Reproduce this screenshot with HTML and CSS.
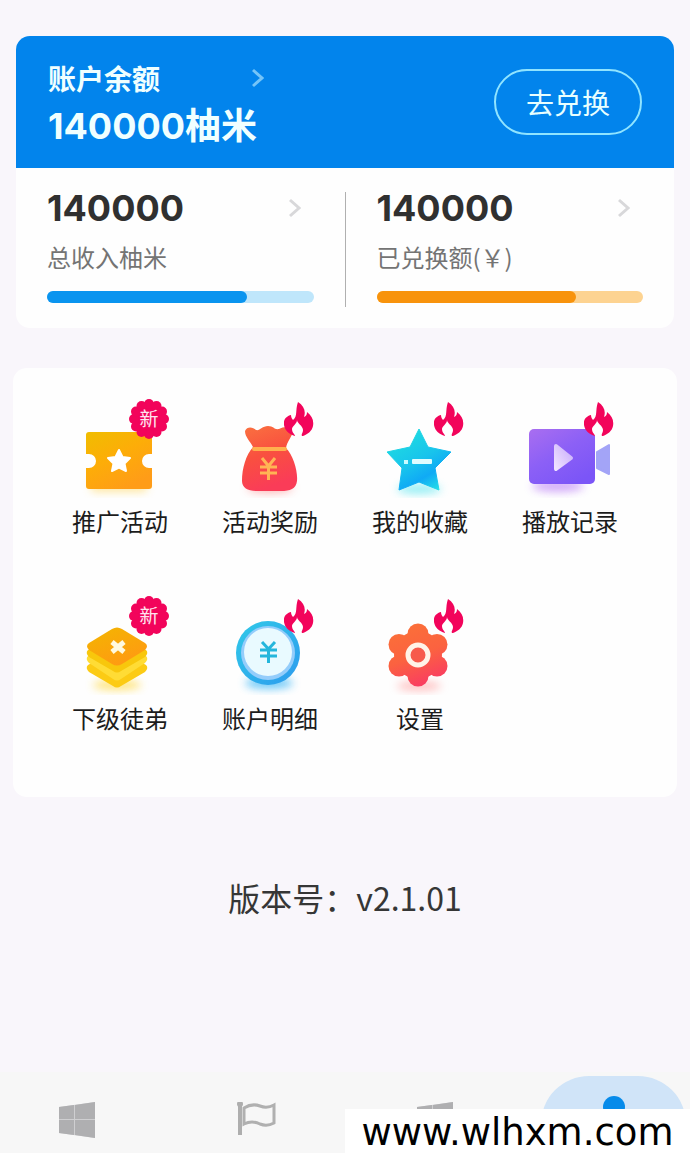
FILE: index.html
```html
<!DOCTYPE html>
<html lang="zh-CN">
<head>
<meta charset="utf-8">
<meta name="viewport" content="width=device-width, initial-scale=1">
<title>账户中心</title>
<link rel="stylesheet" href="styles.css">
</head>
<body>
<svg class="defs" aria-hidden="true">
  <defs>
    <linearGradient id="gold" x1="0" y1="0" x2=".6" y2="1"><stop offset="0" stop-color="#f0bd00"/><stop offset=".5" stop-color="#fdad08"/><stop offset="1" stop-color="#ff9c18"/></linearGradient>
    <linearGradient id="red" x1="0" y1="0" x2=".3" y2="1"><stop offset="0" stop-color="#fa7240"/><stop offset=".5" stop-color="#f9503f"/><stop offset="1" stop-color="#fa3c58"/></linearGradient>
    <linearGradient id="cyan" x1=".2" y1="0" x2=".8" y2="1"><stop offset="0" stop-color="#20dfdf"/><stop offset=".5" stop-color="#18c4ec"/><stop offset=".75" stop-color="#10aaf5"/><stop offset="1" stop-color="#25dfe8"/></linearGradient>
    <linearGradient id="violet" x1="0" y1="0" x2=".7" y2="1"><stop offset="0" stop-color="#a96ef0"/><stop offset=".5" stop-color="#8c60f6"/><stop offset="1" stop-color="#7b55f7"/></linearGradient>
    <linearGradient id="play" x1="0" y1="1" x2="1" y2="0"><stop offset="0" stop-color="#f0e3ff"/><stop offset="1" stop-color="#c9aefb"/></linearGradient>
    <linearGradient id="tile" x1="0" y1="0" x2=".6" y2="1"><stop offset="0" stop-color="#f3b600"/><stop offset="1" stop-color="#ff9a12"/></linearGradient>
    <linearGradient id="ring" x1="0" y1="0" x2="1" y2="1"><stop offset="0" stop-color="#30c9e8"/><stop offset="1" stop-color="#2d9bee"/></linearGradient>
    <linearGradient id="gear" gradientUnits="userSpaceOnUse" x1="36" y1="28" x2="60" y2="92"><stop offset="0" stop-color="#fb7038"/><stop offset=".5" stop-color="#fb6240"/><stop offset="1" stop-color="#f93866"/></linearGradient>
    <filter id="soft" x="-50%" y="-150%" width="200%" height="400%"><feGaussianBlur stdDeviation="4"/></filter>
    <symbol id="fire" viewBox="0 0 30 34">
      <path fill="#f2045b" d="M14 0C20 4 22 9 20 15C22 14 23 13 23 10C28 14 30 18 29 24C28 29 24 32 19 34H11C5 32 1 29 0 23C-1 17 3 14 7 13C7 15 8 17 9 18C14 14 11 8 14 0Z"/>
      <path fill="#fff" d="M13 18C13 21 19 24 19 28C19 31 17 32 18 34H11C11 32 8 31 8 27C8 24 13 22 13 18Z"/>
    </symbol>
    <symbol id="fresh" viewBox="0 0 40 40">
      <g fill="#f2045b"><circle cx="20" cy="20" r="17"/><circle cx="20" cy="5" r="5"/><circle cx="27.500" cy="7" r="5"/><circle cx="33" cy="12.500" r="5"/><circle cx="35" cy="20" r="5"/><circle cx="33" cy="27.500" r="5"/><circle cx="27.500" cy="33" r="5"/><circle cx="20" cy="35" r="5"/><circle cx="12.500" cy="33" r="5"/><circle cx="7" cy="27.500" r="5"/><circle cx="5" cy="20" r="5"/><circle cx="7" cy="12.500" r="5"/><circle cx="12.500" cy="7" r="5"/></g>
      <text class="fresh-text" x="20" y="27" text-anchor="middle">新</text>
    </symbol>
    <symbol id="window" viewBox="0 0 36 36">
      <path fill="#cfcfd1" d="M0 5L36 0V36L0 31Z"/>
      <path fill="#afafb1" d="M0 5L15 3V17H0ZM16 3L36 0V17H16ZM0 18H15V33L0 31ZM16 18H36V36L16 33Z"/>
    </symbol>
    <symbol id="chevron" viewBox="0 0 12 20">
      <path fill="none" stroke="currentColor" stroke-width="3" d="M1 2L10 10L1 18"/>
    </symbol>
  </defs>
</svg>

<main class="page">
  <section class="balance card">
    <header class="balance-head">
      <div class="balance-info">
        <a class="balance-link" href="#account">账户余额<svg class="chevron"><use href="#chevron"/></svg></a>
        <strong class="balance-value">140000柚米</strong>
      </div>
      <button class="redeem" type="button">去兑换</button>
    </header>
    <div class="stats">
      <a class="stat" href="#income">
        <span class="stat-top"><strong class="stat-value">140000</strong><svg class="chevron"><use href="#chevron"/></svg></span>
        <span class="stat-label">总收入柚米</span>
        <span class="bar bar-blue"><span class="bar-fill"></span></span>
      </a>
      <span class="divider"></span>
      <a class="stat" href="#redeemed">
        <span class="stat-top"><strong class="stat-value">140000</strong><svg class="chevron"><use href="#chevron"/></svg></span>
        <span class="stat-label">已兑换额(￥)</span>
        <span class="bar bar-orange"><span class="bar-fill"></span></span>
      </a>
    </div>
  </section>

  <nav class="menu card" aria-label="功能">
    <a class="menu-item" href="#promo">
      <svg class="menu-icon" viewBox="0 0 100 100">
        <rect x="20" y="82" width="58" height="12" rx="6" fill="#ffd24a" opacity=".5" filter="url(#soft)"/>
        <path fill="url(#gold)" d="M19 34H79Q82 34 82 37V56H79A7 7 0 0 0 79 70H82V88Q82 91 79 91H19Q16 91 16 88V70H19A7 7 0 0 0 19 56H16V37Q16 34 19 34Z"/>
        <path fill="#fff" stroke="#fff" stroke-width="2" stroke-linejoin="round" d="M49 52L52.500 59L60 60L54.500 65.500L56 73L49 69.500L42 73L43.500 65.500L38 60L45.500 59Z"/>
        <use href="#fresh" x="59" y="1" width="40" height="40"/>
      </svg>
      <span>推广活动</span>
    </a>
    <a class="menu-item" href="#rewards">
      <svg class="menu-icon" viewBox="0 0 100 100">
        <ellipse cx="50" cy="90" rx="23" ry="5" fill="#ff6d6d" opacity=".5" filter="url(#soft)"/>
        <path fill="url(#red)" d="M33 49C30 43 25 39 25 33C27 28 33 29 36 32C40 33 42 28 48 28C54 28 54 32 59 31C64 28 72 28 73 33C72 39 67 43 66 50C73 57 78 73 77 83C76 91 70 93 61 93H37C28 93 22 90 22 83C22 70 26 57 33 49Z"/>
        <path fill="none" stroke="#ffb04e" stroke-width="4" stroke-linecap="round" d="M34 51H65"/>
        <path fill="none" stroke="#ffb454" stroke-width="3" d="M42 60L48.500 68L55 60M48.500 68V82M40 69H57M40 75H57"/>
        <use href="#fire" x="64" y="4" width="30" height="34"/>
      </svg>
      <span>活动奖励</span>
    </a>
    <a class="menu-item" href="#favorites">
      <svg class="menu-icon" viewBox="0 0 100 100">
        <ellipse cx="49" cy="91" rx="22" ry="5" fill="#4ee4ee" opacity=".6" filter="url(#soft)"/>
        <path fill="url(#cyan)" stroke="url(#cyan)" stroke-linejoin="round" d="M49 31L58 49L81 54L65 70L69 92L49 84L29 92L32 70L17 54L40 49Z"/>
        <path fill="#c8fbff" d="M34 62H38V66H34Z"/><rect x="42" y="61" width="20" height="5" rx="1" fill="#e0fcff"/>
        <use href="#fire" x="64" y="4" width="30" height="34"/>
      </svg>
      <span>我的收藏</span>
    </a>
    <a class="menu-item" href="#history">
      <svg class="menu-icon" viewBox="0 0 100 100">
        <ellipse cx="38" cy="88" rx="26" ry="6" fill="#b573f5" opacity=".6" filter="url(#soft)"/>
        <path fill="#a3a4f7" stroke="#a3a4f7" stroke-width="2" stroke-linejoin="round" d="M77 54L89 47V76L77 70Z"/>
        <rect x="9" y="31" width="66" height="55" rx="5" fill="url(#violet)"/>
        <path fill="url(#play)" stroke="url(#play)" stroke-width="4" stroke-linejoin="round" d="M36 48L51 60L36 71Z"/>
        <use href="#fire" x="64" y="4" width="30" height="34"/>
      </svg>
      <span>播放记录</span>
    </a>
    <a class="menu-item" href="#members">
      <svg class="menu-icon" viewBox="0 0 100 100">
        <ellipse cx="47" cy="90" rx="24" ry="5" fill="#ffd83a" opacity=".7" filter="url(#soft)"/>
        <path fill="#fccb14" d="M18 70L47 54L76 70Q79 73 75 77L51 91Q47 94 43 91L19 77Q15 73 18 70Z"/>
        <path fill="#ffdc35" d="M18 61L47 46L76 61Q79 64 75 68L51 84Q47 87 43 84L19 68Q15 64 18 61Z"/>
        <path fill="#f8c70c" d="M18 55L47 40L76 55Q79 58 75 62L51 76Q47 79 43 76L19 62Q15 58 18 55Z"/>
        <path fill="url(#tile)" d="M42 34Q47 31 52 34L75 48Q79 51 75 55L52 69Q47 72 42 69L19 55Q15 51 19 48Z"/>
        <path stroke="#fff9df" stroke-width="5" d="M42 47L54 57M54 47L42 57"/>
        <use href="#fresh" x="59" y="1" width="40" height="40"/>
      </svg>
      <span>下级徒弟</span>
    </a>
    <a class="menu-item" href="#details">
      <svg class="menu-icon" viewBox="0 0 100 100">
        <ellipse cx="49" cy="88" rx="24" ry="6" fill="#36b4f5" opacity=".7" filter="url(#soft)"/>
        <circle cx="48" cy="58" r="32" fill="url(#ring)"/>
        <circle cx="48" cy="58" r="27" fill="#94cdfb"/>
        <circle cx="48" cy="57" r="24" fill="#e9faff"/>
        <path fill="none" stroke="#24b6dc" stroke-width="3" d="M42 47L48.500 54L55 47M48.500 54V68M40 55H57M40 61H57"/>
        <use href="#fire" x="64" y="4" width="30" height="34"/>
      </svg>
      <span>账户明细</span>
    </a>
    <a class="menu-item" href="#settings">
      <svg class="menu-icon" viewBox="0 0 100 100">
        <ellipse cx="49" cy="91" rx="22" ry="5" fill="#ff8a8a" opacity=".5" filter="url(#soft)"/>
        <g fill="url(#gear)"><circle cx="48" cy="60" r="24"/><circle cx="48" cy="39" r="10.500"/><circle cx="67" cy="49.500" r="10.500"/><circle cx="67" cy="71" r="10.500"/><circle cx="48" cy="81" r="10.500"/><circle cx="29" cy="71" r="10.500"/><circle cx="29" cy="49.500" r="10.500"/></g>
        <circle cx="48" cy="60" r="10" fill="#f75a4c" stroke="#fff3e8" stroke-width="5"/>
        <use href="#fire" x="64" y="4" width="30" height="34"/>
      </svg>
      <span>设置</span>
    </a>
  </nav>

  <p class="version">版本号：v2.1.01</p>
</main>

<footer class="footer">
  <nav class="tabs" aria-label="主导航">
    <a class="tab" href="#home" aria-label="首页"><svg class="tab-icon"><use href="#window"/></svg></a>
    <a class="tab" href="#tasks" aria-label="任务"><svg class="tab-icon tab-flag" viewBox="0 0 40 36">
      <path fill="none" stroke="#aeaeae" stroke-width="4" d="M4 1V33"/><circle cx="4" cy="2" r="3" fill="#aeaeae"/>
      <path fill="none" stroke="#b0b0b0" stroke-width="3" d="M8 6Q16 1 24 4Q31 7 38 3V21Q31 25 24 22Q16 18 8 22Z"/></svg></a>
    <a class="tab" href="#apps" aria-label="应用"><svg class="tab-icon"><use href="#window"/></svg></a>
    <a class="tab tab-active" href="#me" aria-label="我的" aria-current="page"><svg class="tab-icon tab-user" viewBox="0 0 40 44"><circle cx="20" cy="11" r="11" fill="#078bea"/><path fill="#078bea" d="M0 44C0 29 10 24 20 24S40 29 40 44Z"/></svg></a>
  </nav>
  <span class="site">www.wlhxm.com</span>
</footer>
</body>
</html>
```
FILE: styles.css
```css
* {
  box-sizing: border-box;
}

body {
  margin: 0;
  min-height: 100vh;
  display: flex;
  flex-direction: column;
  background: #f9f6fb;
  color: #1c1c1c;
  font-family: "Noto Sans CJK SC", "Noto Sans", sans-serif;
}

a {
  color: inherit;
  text-decoration: none;
}

.defs {
  position: absolute;
  width: 0;
  height: 0;
}

.page {
  flex: 1;
  padding: 36px 13px 0;
}

.card {
  border-radius: 14px;
  background: #fefefe;
}

.balance {
  margin: 0 3px;
  overflow: hidden;
}

.balance-head {
  display: flex;
  align-items: center;
  justify-content: space-between;
  height: 132px;
  padding: 0 32px;
  background: #0284ec;
  color: #f0ffff;
}

.balance-info {
  display: flex;
  flex-direction: column;
  gap: 4px;
  padding-top: 4px;
}

.balance-link {
  display: flex;
  align-items: center;
  justify-content: space-between;
  width: 216px;
  line-height: 40px;
  font-size: 28px;
  font-weight: 700;
}

.chevron {
  width: 12px;
  height: 20px;
  color: #d8d8da;
}

.balance-link .chevron {
  color: #74c4f8;
}

.balance-value,
.stat-value {
  font-family: Inter, "Noto Sans CJK SC", sans-serif;
  font-size: 36px;
  font-weight: 700;
  line-height: 48px;
}

.redeem {
  width: 148px;
  height: 66px;
  padding: 0;
  border: 2px solid #90e4ff;
  border-radius: 33px;
  background: transparent;
  color: #e8ffff;
  font-family: inherit;
  font-size: 28px;
}

.stats {
  display: grid;
  grid-template-columns: 1fr 1px 1fr;
  gap: 31px;
  padding: 16px 31px 25px;
}

.stat {
  display: flex;
  flex-direction: column;
}

.stat-top {
  display: flex;
  align-items: center;
  justify-content: space-between;
  padding-right: 13px;
}

.stat-value {
  color: #303030;
}

.stat-label {
  margin: 7px 0 17px;
  color: #747474;
  font-size: 24px;
  line-height: 35px;
}

.divider {
  margin: 8px 0 -4px;
  background: #b0b0b0;
}

.bar {
  height: 12px;
  border-radius: 6px;
}

.bar-fill {
  display: block;
  width: 75%;
  height: 100%;
  border-radius: 6px;
}

.bar-blue {
  background: #bfe6fb;
}

.bar-blue .bar-fill {
  background: #0a94ef;
}

.bar-orange {
  background: #fdd391;
}

.bar-orange .bar-fill {
  background: #f8930c;
}

.menu {
  display: grid;
  grid-template-columns: repeat(4, 1fr);
  row-gap: 58px;
  margin-top: 40px;
  padding: 30px 32px 63px;
}

.menu-item {
  display: flex;
  flex-direction: column;
  align-items: center;
  gap: 7px;
  font-size: 24px;
  line-height: 32px;
}

.menu-icon {
  width: 100px;
  height: 100px;
}

.fresh-text {
  fill: #ffe3ee;
  font-size: 19px;
}

.version {
  margin: 76px 0 32px;
  color: #363636;
  font-size: 32px;
  line-height: 48px;
  text-align: center;
}

.footer {
  position: relative;
  background: #f7f7f7;
}

.tabs {
  display: flex;
  justify-content: space-between;
  height: 81px;
  padding: 4px 4px 0;
  overflow: hidden;
}

.tab {
  display: flex;
  justify-content: center;
  width: 145px;
  height: 96px;
  padding-top: 26px;
}

.tab-icon {
  width: 36px;
  height: 36px;
}

.tab-flag {
  width: 40px;
}

.tab-active {
  padding-top: 20px;
  border-radius: 48px;
  background: #d0e4f8;
}

.tab-user {
  width: 40px;
  height: 44px;
}

.site {
  position: absolute;
  right: 0;
  bottom: 0;
  width: 50%;
  padding-top: 4px;
  background: #fff;
  color: #000;
  font-family: "DejaVu Sans", sans-serif;
  font-size: 37px;
  line-height: 40px;
  text-align: center;
}
```
